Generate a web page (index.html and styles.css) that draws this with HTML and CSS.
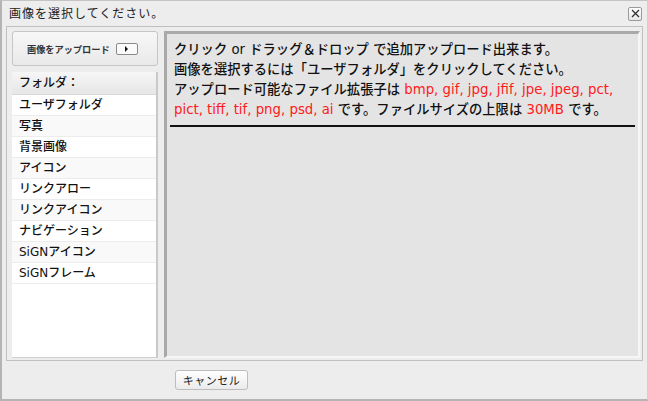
FILE: index.html
```html
<!DOCTYPE html>
<html lang="ja">
<head>
<meta charset="utf-8">
<title>画像を選択してください。</title>
<link rel="stylesheet" href="styles.css">
</head>
<body>
<div class="window">
  <div class="titlebar">
    <span class="title">画像を選択してください。</span>
    <button class="close" aria-label="閉じる">
      <svg width="9" height="9" viewBox="0 0 9 9"><path d="M1 1L8 8M8 1L1 8" stroke="#333" stroke-width="1.3" fill="none"/></svg>
    </button>
  </div>
  <div class="frame">
    <aside class="sidebar">
      <div class="upload">
        <span class="upload-label">画像をアップロード</span>
        <span class="upload-arrow"><svg width="5" height="6" viewBox="0 0 5 6"><path d="M1 0L4 3L1 6Z" fill="#111"/></svg></span>
      </div>
      <div class="folders">
        <div class="folders-head">フォルダ：</div>
        <ul class="folder-list">
          <li class="first">ユーザフォルダ</li>
          <li>写真</li>
          <li>背景画像</li>
          <li>アイコン</li>
          <li>リンクアロー</li>
          <li>リンクアイコン</li>
          <li>ナビゲーション</li>
          <li>SiGNアイコン</li>
          <li>SiGNフレーム</li>
        </ul>
      </div>
    </aside>
    <main class="panel">
      <div class="info">
        <p>クリック or ドラッグ＆ドロップ で追加アップロード出来ます。</p>
        <p>画像を選択するには「ユーザフォルダ」をクリックしてください。</p>
        <p>アップロード可能なファイル拡張子は <span class="red">bmp, gif, jpg, jfif, jpe, jpeg, pct,</span><br><span class="red">pict, tiff, tif, png, psd, ai</span> です。ファイルサイズの上限は <span class="red">30MB</span> です。</p>
      </div>
    </main>
  </div>
  <div class="footer">
    <button class="cancel">キャンセル</button>
  </div>
</div>
</body>
</html>
```

FILE: styles.css
```css
* { box-sizing: border-box; }
html, body { margin: 0; padding: 0; }
body {
  width: 648px;
  height: 401px;
  overflow: hidden;
  background: #ededed;
  font-family: "DejaVu Sans", "Noto Sans CJK JP", sans-serif;
  text-spacing-trim: space-all;
  color: #111;
}
.window {
  width: 648px;
  height: 401px;
  background: #ededed;
  border-top: 1px solid #c4c4c4;
  border-left: 2px solid #b4b4b4;
  border-bottom: 2px solid #b4b4b4;
  border-right: 1px solid #d0d0d0;
  display: flex;
  flex-direction: column;
}
.titlebar {
  height: 25px;
  display: flex;
  align-items: center;
  justify-content: space-between;
  padding: 0 5px 0 7px;
}
.title {
  font-size: 12px;
  letter-spacing: 1px;
  line-height: 16px;
  color: #222;
}
.close {
  width: 14px;
  height: 14px;
  padding: 0;
  margin: 0;
  border: 1px solid #9a9a9a;
  border-radius: 2px;
  background: linear-gradient(#ffffff, #e6e6e6);
  display: flex;
  align-items: center;
  justify-content: center;
}
.frame {
  margin: 0 4px 0 4px;
  height: 335px;
  border: 1px solid #c3bfbf;
  padding: 4px 2px 2px 5px;
  display: flex;
  gap: 6px;
}
.sidebar {
  width: 146px;
  display: flex;
  flex-direction: column;
  gap: 6px;
}
.upload {
  height: 35px;
  border: 1px solid #c6c6c6;
  border-radius: 3px;
  background: linear-gradient(#f7f7f7, #e9e9e9);
  display: flex;
  align-items: center;
  padding-left: 14px;
  gap: 6px;
}
.upload-label {
  font-size: 9.2px;
  font-weight: bold;
  color: #333;
}
.upload-arrow {
  width: 22px;
  height: 12px;
  border: 1px solid #8a8a8a;
  border-radius: 2px;
  background: #fafafa;
  display: flex;
  align-items: center;
  justify-content: center;
}
.folders {
  flex: 1;
  background: #fff;
  border-right: 2px solid #c9c9c9;
  border-bottom: 1px solid #cfcfcf;
  display: flex;
  flex-direction: column;
}
.folders-head {
  height: 23px;
  padding-left: 7px;
  font-size: 12px;
  line-height: 22px;
  font-weight: 500;
  background: linear-gradient(#f6f6f6, #e6e6e6);
  border-bottom: 1px solid #d9d9d9;
  color: #111;
}
.folder-list {
  list-style: none;
  margin: 0;
  padding: 0;
}
.folder-list li {
  height: 21px;
  padding-left: 7px;
  font-size: 12px;
  line-height: 20px;
  font-weight: 500;
  border-bottom: 1px solid #ececec;
  color: #111;
}
.folder-list li:nth-child(even) { background: #f9f9f9; }
.panel {
  flex: 1;
  background: #e4e4e4;
  border-top: 3px solid #a9a9a9;
  border-left: 3px solid #a9a9a9;
  border-right: 2px solid #f6f6f6;
  border-bottom: 2px solid #f6f6f6;
  padding: 0 3px;
}
.info {
  padding: 6px 0 5px 4px;
  border-bottom: 2px solid #111;
}
.info p {
  margin: 0;
  font-size: 13.3px;
  line-height: 20px;
  font-weight: 500;
  color: #111;
  white-space: nowrap;
}
.red { color: #ff1a1a; }
.footer {
  flex: 1;
  display: flex;
  align-items: center;
  padding-left: 173px;
  padding-bottom: 1px;
}
.cancel {
  width: 73px;
  height: 20px;
  padding: 0;
  border: 1px solid #bdbdbd;
  border-radius: 3px;
  background: linear-gradient(#ffffff, #ebebeb);
  font-family: "Noto Sans CJK JP", sans-serif;
  font-size: 11px;
  letter-spacing: 0.5px;
  color: #222;
}
```
